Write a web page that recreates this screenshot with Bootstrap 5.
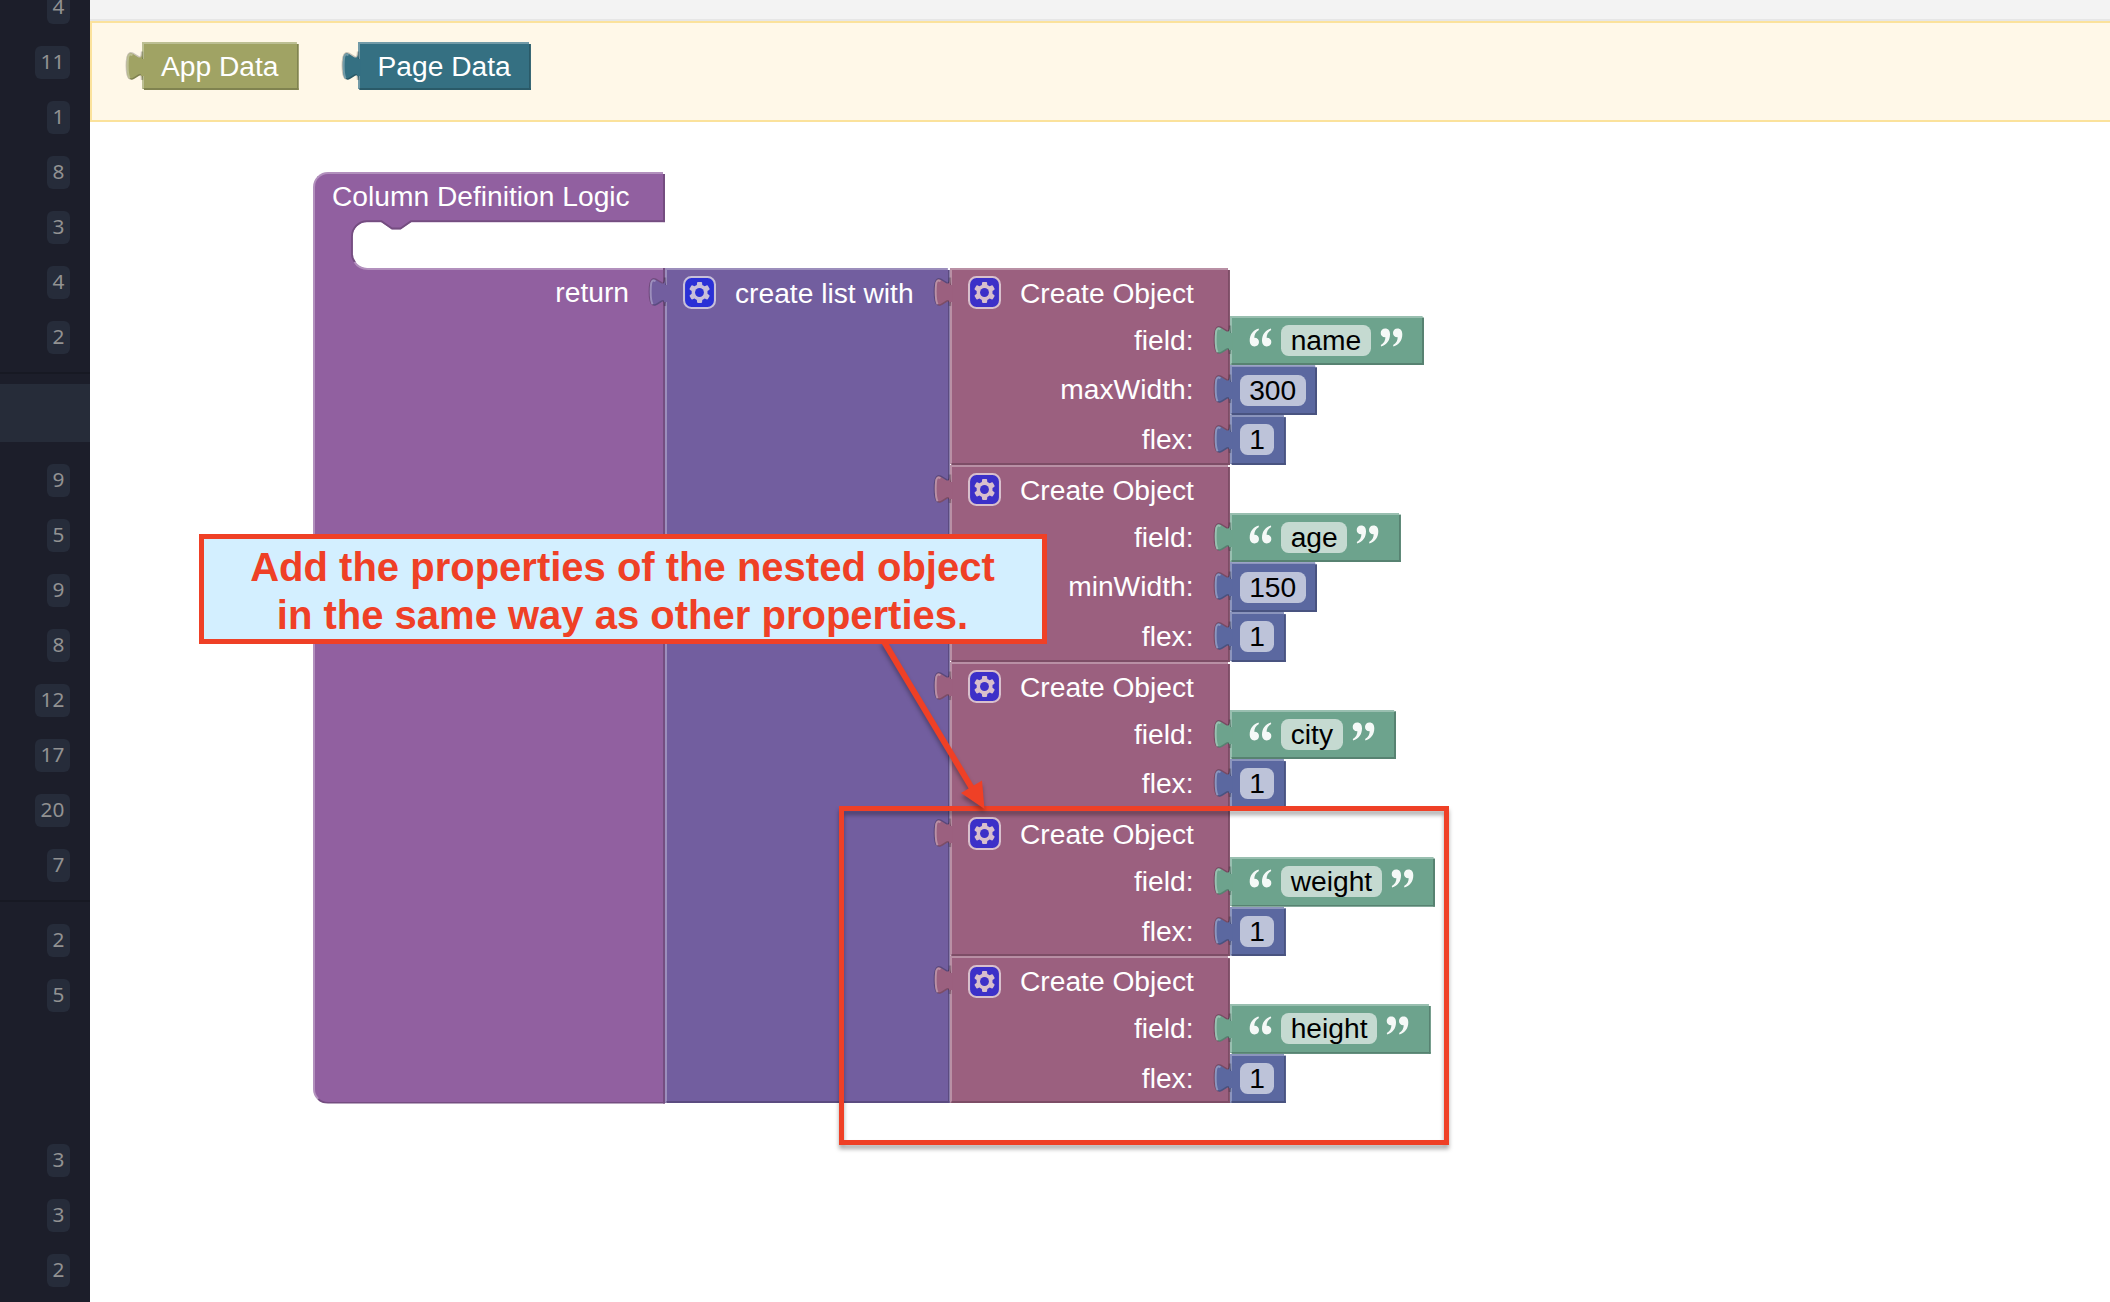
<!DOCTYPE html>
<html lang="en">
<head>
<meta charset="utf-8">
<meta name="viewport" content="width=device-width, initial-scale=1">
<title>Column Definition Logic</title>
<link rel="stylesheet" href="https://cdn.jsdelivr.net/npm/bootstrap@5.3.0/dist/css/bootstrap.min.css">
<style>
  body { font-family: "Liberation Sans", Arial, sans-serif; background: #fff; height: 1302px; }

  /* sidebar counters */
  .side { width: 90px; background: #1c1e2a; font-family: "Noto Sans", sans-serif; margin-top: -20px; height: 1322px; }
  .side-row { height: 55px; padding-right: 20px; }
  .side-active { height: 58px; background: #262c39; margin: 10px 0 11px; }
  .side-rule { height: 2px; background: #171923; margin-top: 7px; }
  .side-rule-low { margin-bottom: 11px; }
  .count { height: 33px; line-height: 31px; padding: 0 5.6px; border-radius: 6px; background: #262c3a; color: #929292; font-size: 20.8px; }

  /* top strips */
  .strip { height: 21px; background: #f3f3f3; border-bottom: 2px solid #e6e6e6; }
  .shelf { height: 101px; background: #fff8e8; border: 2px solid #fbe29c; border-right: 0; padding: 19px 0 0 50px; gap: 59px; }

  /* puzzle blocks */
  .blk { position: relative; background: var(--c); color: #fff; font-size: 28.2px; white-space: nowrap;
    border: 2px solid; border-color: var(--l) var(--d) var(--d) var(--l);
    clip-path: polygon(-20px 0, calc(100% - 2px) 0, calc(100% - 2px) 2px, 100% 2px, 100% 100%, 2px 100%, 2px calc(100% - 1px), -20px calc(100% - 1px)); }
  .c-app  { --c: #a0a364; --l: #bcbf93; --d: #808350; }
  .c-page { --c: #357082; --l: #729ba8; --d: #2a5a68; }
  .c-root { --c: #9160a0; --l: #b290bd; --d: #744d80; }
  .c-list { --c: #725e9f; --l: #9c8ebc; --d: #5b4b80; --gear: #2a30d6; --ring: #c7bfd9; }
  .c-obj  { --c: #9b607f; --l: #b990a5; --d: #7d4d66; --gear: #3c30c8; --ring: #d8bfcc; }
  .c-text { --c: #6da38d; --l: #99bfb0; --d: #578271; --in: #c5dad1; }
  .c-num  { --c: #5b68a0; --l: #8c95bd; --d: #495380; --in: #bdc3d9; }
  .tab { position: absolute; left: -19px; top: -2px; width: 20px; height: 42px; overflow: visible; }
  .gear { width: 33px; height: 33px; }
  .shelf .blk { height: 48px; line-height: 45px; padding: 0 18px 0 17px; }
  .shelf .c-page { padding: 0 18px; }

  .workspace { padding: 50px 0 0 223px; }
  .root-blk { width: 352px; height: 931.5px; border-radius: 15px 0 0 15px; clip-path: polygon(0 0, calc(100% - 2px) 0, calc(100% - 2px) 2px, 100% 2px, 100% 100%, 0 100%); }
  .root-head { height: 46px; line-height: 45px; padding-left: 17px; }
  .mouth { display: block; width: 314px; height: 50px; margin-left: 36px; }
  .root-ret { line-height: 45px; padding-right: 34px; }
  .list-col { margin-top: 96px; }
  .list-blk { width: 284.5px; padding: 0 0 0 16px; }
  .top-row { height: 45.7px; line-height: 46px; gap: 19px; }
  .obj-blk { width: 280.3px; padding-left: 16px; }
  .obj-blk .top-row { gap: 19.5px; }
  .label-row { height: 49.75px; line-height: 48px; padding-right: 34.3px; }
  .obj-blk .label-row:last-child { height: 47.75px; }
  .vals { padding-top: 47.7px; }
  .val { height: 49.75px; }
  .c-num.val { padding: 0 9.3px 0 7.8px; }
  .c-text.val { padding: 0 19.5px 0 17.3px; gap: 9px; }
  .entry { height: 31px; line-height: 31px; padding: 0 9.6px; border-radius: 7.7px; background: var(--in); color: #000; margin-top: -.5px; }
  .quo { width: 23px; height: 19px; margin-top: -6px; }

  /* annotations */
  .note { left: 199px; top: 534px; width: 848px; height: 110px; border: 5px solid #ef4026; background: #d3efff; color: #ef4026;
    font-size: 40px; line-height: 48px; padding-top: 4px; padding-right: 1px; }
  .frame { left: 839px; top: 806px; width: 610px; height: 339px; border: 5px solid #ef4026; filter: drop-shadow(0 4px 2px rgba(0,0,0,.33)); }
  .arrow { left: 860px; top: 640px; width: 150px; height: 180px; filter: drop-shadow(0 4px 2px rgba(0,0,0,.3)); }
</style>
<script src="https://cdn.jsdelivr.net/npm/bootstrap@5.3.0/dist/js/bootstrap.bundle.min.js"></script>
</head>
<body class="overflow-hidden position-relative">

<svg class="d-none" aria-hidden="true">
  <symbol id="tab" viewBox="0 0 20 42" overflow="visible">
    <path d="M17,9.5 c0,19 -15.2,-15.2 -15.2,14.3 s15.2,-4.8 15.2,14.2 z" fill="none" stroke="rgba(0,0,0,.22)" stroke-width="2.4"/>
    <path d="M18,10.8 c0,19 -15.2,-15.2 -15.2,14.3 s15.2,-4.8 15.2,14.2 z" fill="var(--d)"/>
    <path d="M17,9.5 c0,19 -15.2,-15.2 -15.2,14.3 s15.2,-4.8 15.2,14.2 z" fill="var(--c)"/>
    <path d="M16,17 h3.2 v17 h-3.2z" fill="var(--c)"/>
    <path d="M7.5,13.2 C2.8,10.5 2.8,16 2.7,24 C2.7,30 3.2,34 4.6,36.2" fill="none" stroke="var(--l)" stroke-width="1.9"/>
  </symbol>
  <symbol id="gear" viewBox="0 0 16 16">
    <rect x=".5" y=".5" width="15" height="15" rx="3.6" fill="var(--gear)" stroke="var(--ring)" stroke-width="1"/>
    <path d="m4.203,7.296 0,1.368 -0.92,0.677 -0.11,0.41 0.9,1.559 0.41,0.11 1.043,-0.457 1.187,0.683 0.127,1.134 0.3,0.3 1.8,0 0.3,-0.299 0.127,-1.138 1.185,-0.682 1.046,0.458 0.409,-0.11 0.9,-1.559 -0.11,-0.41 -0.92,-0.677 0,-1.366 0.92,-0.677 0.11,-0.41 -0.9,-1.559 -0.409,-0.109 -1.046,0.458 -1.185,-0.682 -0.127,-1.138 -0.3,-0.299 -1.8,0 -0.3,0.3 -0.126,1.135 -1.187,0.682 -1.043,-0.457 -0.41,0.11 -0.899,1.559 0.108,0.409z" fill="var(--ring)"/>
    <circle cx="8" cy="8" r="2.15" fill="var(--gear)"/>
  </symbol>
  <symbol id="quo" viewBox="0 0 23 19">
    <path d="M9.6,.6 C4,2 .7,7 .7,12.6 C.7,16.3 2.6,18.4 5.4,18.4 C8.2,18.4 10,16.5 10,14 C10,11.4 8.2,9.7 5.3,9.8 C5.3,6.5 6.8,3.8 9.9,2 Z M21.9,.6 C16.3,2 13,7 13,12.6 C13,16.3 14.9,18.4 17.7,18.4 C20.5,18.4 22.3,16.5 22.3,14 C22.3,11.4 20.5,9.7 17.6,9.8 C17.6,6.5 19.1,3.8 22.2,2 Z" fill="#fff" fill-opacity=".93"/>
  </symbol>
  <symbol id="quc" viewBox="0 0 23 19">
    <use href="#quo" width="23" height="19" transform="rotate(180 11.5 9.5)"/>
  </symbol>
</svg>

<div class="d-flex h-100">
  <aside class="side flex-shrink-0">
    <div class="side-row d-flex align-items-center justify-content-end"><span class="count">4</span></div>
    <div class="side-row d-flex align-items-center justify-content-end"><span class="count">11</span></div>
    <div class="side-row d-flex align-items-center justify-content-end"><span class="count">1</span></div>
    <div class="side-row d-flex align-items-center justify-content-end"><span class="count">8</span></div>
    <div class="side-row d-flex align-items-center justify-content-end"><span class="count">3</span></div>
    <div class="side-row d-flex align-items-center justify-content-end"><span class="count">4</span></div>
    <div class="side-row d-flex align-items-center justify-content-end"><span class="count">2</span></div>
    <div class="side-rule"></div>
    <div class="side-active"></div>
    <div class="side-row d-flex align-items-center justify-content-end"><span class="count">9</span></div>
    <div class="side-row d-flex align-items-center justify-content-end"><span class="count">5</span></div>
    <div class="side-row d-flex align-items-center justify-content-end"><span class="count">9</span></div>
    <div class="side-row d-flex align-items-center justify-content-end"><span class="count">8</span></div>
    <div class="side-row d-flex align-items-center justify-content-end"><span class="count">12</span></div>
    <div class="side-row d-flex align-items-center justify-content-end"><span class="count">17</span></div>
    <div class="side-row d-flex align-items-center justify-content-end"><span class="count">20</span></div>
    <div class="side-row d-flex align-items-center justify-content-end"><span class="count">7</span></div>
    <div class="side-rule side-rule-low"></div>
    <div class="side-row d-flex align-items-center justify-content-end"><span class="count">2</span></div>
    <div class="side-row d-flex align-items-center justify-content-end"><span class="count">5</span></div>
    <div class="side-row"></div>
    <div class="side-row"></div>
    <div class="side-row d-flex align-items-center justify-content-end"><span class="count">3</span></div>
    <div class="side-row d-flex align-items-center justify-content-end"><span class="count">3</span></div>
    <div class="side-row d-flex align-items-center justify-content-end"><span class="count">2</span></div>
  </aside>

  <main class="flex-grow-1">
    <div class="strip"></div>
    <div class="shelf d-flex align-items-start">
      <div class="blk c-app"><svg class="tab"><use href="#tab"/></svg>App Data</div>
      <div class="blk c-page"><svg class="tab"><use href="#tab"/></svg>Page Data</div>
    </div>

    <div class="workspace d-flex align-items-start">
      <div class="blk root-blk c-root flex-shrink-0">
        <div class="root-head">Column Definition Logic</div>
        <svg class="mouth" viewBox="0 0 314 50">
          <path d="M314,2.3 H60 L49.5,9.3 H41 L30.5,2.3 H16 A14.5,14.5 0 0 0 1.5,16.8 V34 A14,14 0 0 0 15.5,48 H314 Z" fill="#fff"/>
          <path d="M314,1.2 H60 L49.5,8.5 H41 L30.5,1.2 H16 A15,15 0 0 0 1,16.5 V34 Q1,39 4.5,43" fill="none" stroke="#744d80" stroke-width="1.8"/>
          <path d="M3.5,42 Q8,49 17,49 H312" fill="none" stroke="#b290bd" stroke-width="2"/>
        </svg>
        <div class="root-ret text-end">return</div>
      </div>

      <div class="list-col d-flex">
        <div class="blk list-blk c-list flex-shrink-0">
          <svg class="tab"><use href="#tab"/></svg>
          <div class="top-row d-flex align-items-center"><svg class="gear"><use href="#gear"/></svg><span>create list with</span></div>
        </div>

        <div class="d-flex flex-column">
          <div class="d-flex">
            <div class="blk obj-blk c-obj">
              <svg class="tab"><use href="#tab"/></svg>
              <div class="top-row d-flex align-items-center"><svg class="gear"><use href="#gear"/></svg><span>Create Object</span></div>
              <div class="label-row text-end">field:</div>
              <div class="label-row text-end">maxWidth:</div>
              <div class="label-row text-end">flex:</div>
            </div>
            <div class="vals d-flex flex-column align-items-start">
              <div class="blk val c-text d-flex align-items-center"><svg class="tab"><use href="#tab"/></svg><svg class="quo"><use href="#quo"/></svg><span class="entry">name</span><svg class="quo"><use href="#quc"/></svg></div>
              <div class="blk val c-num d-flex align-items-center"><svg class="tab"><use href="#tab"/></svg><span class="entry">300</span></div>
              <div class="blk val c-num d-flex align-items-center"><svg class="tab"><use href="#tab"/></svg><span class="entry">1</span></div>
            </div>
          </div>

          <div class="d-flex">
            <div class="blk obj-blk c-obj">
              <svg class="tab"><use href="#tab"/></svg>
              <div class="top-row d-flex align-items-center"><svg class="gear"><use href="#gear"/></svg><span>Create Object</span></div>
              <div class="label-row text-end">field:</div>
              <div class="label-row text-end">minWidth:</div>
              <div class="label-row text-end">flex:</div>
            </div>
            <div class="vals d-flex flex-column align-items-start">
              <div class="blk val c-text d-flex align-items-center"><svg class="tab"><use href="#tab"/></svg><svg class="quo"><use href="#quo"/></svg><span class="entry">age</span><svg class="quo"><use href="#quc"/></svg></div>
              <div class="blk val c-num d-flex align-items-center"><svg class="tab"><use href="#tab"/></svg><span class="entry">150</span></div>
              <div class="blk val c-num d-flex align-items-center"><svg class="tab"><use href="#tab"/></svg><span class="entry">1</span></div>
            </div>
          </div>

          <div class="d-flex">
            <div class="blk obj-blk c-obj">
              <svg class="tab"><use href="#tab"/></svg>
              <div class="top-row d-flex align-items-center"><svg class="gear"><use href="#gear"/></svg><span>Create Object</span></div>
              <div class="label-row text-end">field:</div>
              <div class="label-row text-end">flex:</div>
            </div>
            <div class="vals d-flex flex-column align-items-start">
              <div class="blk val c-text d-flex align-items-center"><svg class="tab"><use href="#tab"/></svg><svg class="quo"><use href="#quo"/></svg><span class="entry">city</span><svg class="quo"><use href="#quc"/></svg></div>
              <div class="blk val c-num d-flex align-items-center"><svg class="tab"><use href="#tab"/></svg><span class="entry">1</span></div>
            </div>
          </div>

          <div class="d-flex">
            <div class="blk obj-blk c-obj">
              <svg class="tab"><use href="#tab"/></svg>
              <div class="top-row d-flex align-items-center"><svg class="gear"><use href="#gear"/></svg><span>Create Object</span></div>
              <div class="label-row text-end">field:</div>
              <div class="label-row text-end">flex:</div>
            </div>
            <div class="vals d-flex flex-column align-items-start">
              <div class="blk val c-text d-flex align-items-center"><svg class="tab"><use href="#tab"/></svg><svg class="quo"><use href="#quo"/></svg><span class="entry">weight</span><svg class="quo"><use href="#quc"/></svg></div>
              <div class="blk val c-num d-flex align-items-center"><svg class="tab"><use href="#tab"/></svg><span class="entry">1</span></div>
            </div>
          </div>

          <div class="d-flex">
            <div class="blk obj-blk c-obj">
              <svg class="tab"><use href="#tab"/></svg>
              <div class="top-row d-flex align-items-center"><svg class="gear"><use href="#gear"/></svg><span>Create Object</span></div>
              <div class="label-row text-end">field:</div>
              <div class="label-row text-end">flex:</div>
            </div>
            <div class="vals d-flex flex-column align-items-start">
              <div class="blk val c-text d-flex align-items-center"><svg class="tab"><use href="#tab"/></svg><svg class="quo"><use href="#quo"/></svg><span class="entry">height</span><svg class="quo"><use href="#quc"/></svg></div>
              <div class="blk val c-num d-flex align-items-center"><svg class="tab"><use href="#tab"/></svg><span class="entry">1</span></div>
            </div>
          </div>
        </div>
      </div>
    </div>
  </main>
</div>

<div class="frame position-absolute"></div>
<svg class="arrow position-absolute" viewBox="0 0 150 180">
  <path d="M23,0 L113,150" stroke="#ef4026" stroke-width="6" fill="none"/>
  <path d="M101,153 L122,140.5 L124.5,169 Z" fill="#ef4026"/>
</svg>
<div class="note position-absolute text-center fw-bold">Add the properties of the nested object<br>in the same way as other properties.</div>
</body>
</html>
